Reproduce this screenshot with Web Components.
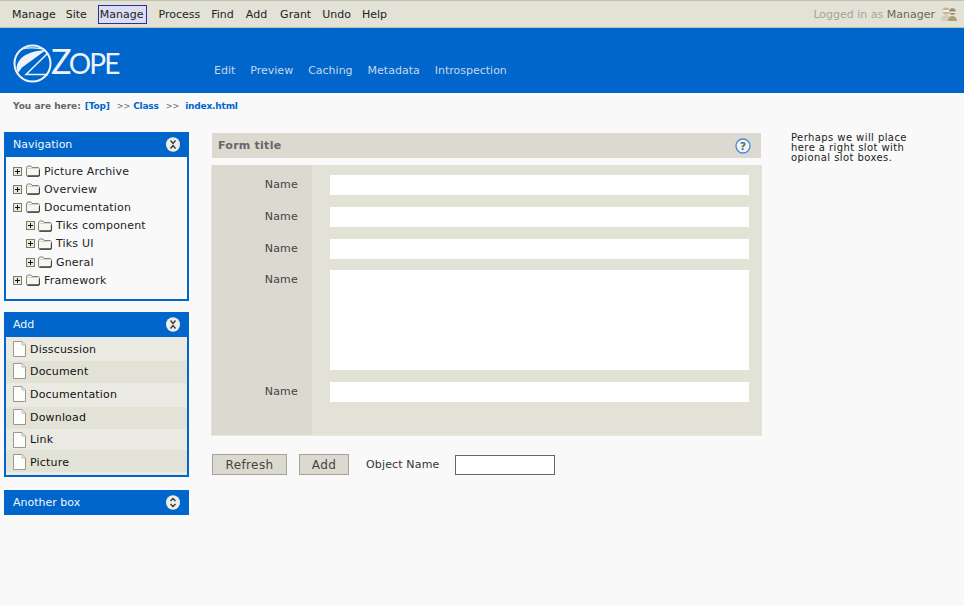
<!DOCTYPE html>
<html>
<head>
<meta charset="utf-8">
<title>Zope</title>
<style>
html, body { margin:0; padding:0; background:#f9f9f9; }
body { font-family:"DejaVu Sans", sans-serif; font-size:11px; color:#222; }
.page { display:flex; align-items:flex-start; padding:32px 0 0 4px; }
</style>
</head>
<body>
<top-bar></top-bar>
<logo-bar></logo-bar>
<bread-crumb></bread-crumb>
<div class="page">
  <left-col>
    <side-box title="Navigation" state="open">
      <tree-node>Picture Archive</tree-node>
      <tree-node>Overview</tree-node>
      <tree-node>Documentation</tree-node>
      <tree-node level="1">Tiks component</tree-node>
      <tree-node level="1">Tiks UI</tree-node>
      <tree-node level="1">Gneral</tree-node>
      <tree-node>Framework</tree-node>
    </side-box>
    <side-box title="Add" state="open" flush>
      <add-item h="24">Disscussion</add-item>
      <add-item h="22" up alt>Document</add-item>
      <add-item h="24" up>Documentation</add-item>
      <add-item h="22" up alt>Download</add-item>
      <add-item h="21">Link</add-item>
      <add-item h="22" down alt>Picture</add-item>
    </side-box>
    <side-box title="Another box" state="closed"></side-box>
  </left-col>
  <form-panel></form-panel>
  <right-slot>Perhaps we will place here a right slot with opional slot boxes.</right-slot>
</div>

<script>
class TopBar extends HTMLElement {
  connectedCallback(){
    this.attachShadow({mode:"open"});
    var items = ["Manage","Site","Manage","Process","Find","Add","Grant","Undo","Help"];
    var cls = ["","site","on","","","add","grant","",""];
    this.shadowRoot.innerHTML = `
    <style>
      :host { display:flex; justify-content:space-between; align-items:center; box-sizing:border-box; height:28px; background:#e2e2d6;
              border-top:1px solid #c4c0b2; border-bottom:1px solid #c4c0b2; padding:0 7px 0 12px; font-size:11px; }
      nav { display:flex; gap:11px; color:#222; }
      nav span.on { background:#dcdcf2; border:1px solid #2e2e94; padding:2px 2px 2px 1px; margin:-3px 1px -3px 0; }
      nav span.site { margin-left:-1px; }
      nav span.add { margin-left:1px; }
      nav span.grant { margin-left:2px; }
      .user { display:flex; align-items:center; gap:6px; color:#a8a496; }
      .user b { font-weight:normal; color:#6a6658; }
      svg { display:block; }
    </style>
    <nav>${items.map((t,i)=>`<span class="${cls[i]}">${t}</span>`).join("")}</nav>
    <div class="user"><span>Logged in as <b>Manager</b></span>
      <svg width="16" height="16" viewBox="0 0 16 16">
        <circle cx="5" cy="5" r="3.400" fill="#c4b496"/><path d="M2 4h6v2H2z" fill="#f4f0e6"/>
        <path d="M0 15c0-4 2-6 5-6s5 2 5 6z" fill="#d8ccb4"/>
        <circle cx="11.500" cy="5.500" r="3.200" fill="#9c8a68"/><path d="M8.500 5.500h6.500V7H8.500z" fill="#ece8dc"/>
        <path d="M7 15c0-3 2-5 4.500-5s4.500 2 4.500 5z" fill="#b09c76"/>
      </svg>
    </div>`;
  }
}
customElements.define("top-bar", TopBar);

class LogoBar extends HTMLElement {
  connectedCallback(){
    this.attachShadow({mode:"open"});
    var tabs = ["Edit","Preview","Caching","Metadata","Introspection"];
    this.shadowRoot.innerHTML = `
    <style>
      :host { display:flex; box-sizing:border-box; height:65px; background:#0066cc; padding-left:13px; }
      .logo { display:flex; width:201px; align-items:flex-start; padding-top:16px; box-sizing:border-box; }
      .word { color:#eef3fb; font:400 28px/34px "Lato","Open Sans",sans-serif; letter-spacing:-1.800px; margin:0 0 0 -1px; }
      .word i { font-style:normal; font-size:34px; margin-right:-1px; }
      nav { display:flex; gap:15px; align-self:flex-end; padding-bottom:15px; color:#c8d6ea; line-height:14px; }
      svg { display:block; flex:none; }
    </style>
    <div class="logo">
      <svg width="39" height="39" viewBox="0 0 39 39">
        <circle cx="19.500" cy="19.500" r="18" fill="none" stroke="#eef3fb" stroke-width="2"/>
        <path d="M3.500 24C5 14 13 7.500 33 6L9 23.500 5 29Z" fill="#eef3fb"/>
        <path d="M9 5C14 3.500 25 3.500 32 5.500" fill="none" stroke="#eef3fb" stroke-width="1.300"/>
        <path d="M35 9 13 30.500H35" fill="none" stroke="#eef3fb" stroke-width="1.500"/>
      </svg>
      <div class="word"><i>Z</i>OPE</div>
    </div>
    <nav>${tabs.map(t=>`<span>${t}</span>`).join("")}</nav>`;
  }
}
customElements.define("logo-bar", LogoBar);

class BreadCrumb extends HTMLElement {
  connectedCallback(){
    this.attachShadow({mode:"open"});
    this.shadowRoot.innerHTML = `
    <style>
      :host { display:flex; height:0; padding:7px 0 0 13px; font-size:9px; line-height:13px; color:#666; }
      b { font-weight:bold; }
      .l { color:#0066cc; letter-spacing:-.18px; }
      .s { font-weight:normal; font-size:8px; margin:0 3px 0 7px; }
    </style>
    <b>You are here:</b><b class="l" style="margin-left:4px">[Top]</b><span class="s">&gt;&gt;</span><b class="l">Class</b><span class="s" style="margin:0 6px 0 7px">&gt;&gt;</span><b class="l">index.html</b>`;
  }
}
customElements.define("bread-crumb", BreadCrumb);

class LeftCol extends HTMLElement {
  connectedCallback(){
    this.attachShadow({mode:"open"});
    this.shadowRoot.innerHTML = `
    <style>:host { display:flex; flex-direction:column; width:185px; flex:none; }</style><slot></slot>`;
  }
}
customElements.define("left-col", LeftCol);

class SideBox extends HTMLElement {
  connectedCallback(){
    this.attachShadow({mode:"open"});
    var open = this.getAttribute("state") == "open";
    var arrows = open
      ? `<path d="M4.500 3.500 7 6.500l2.500-3M4.500 11.500 7 8.500l2.500 3" />`
      : `<path d="M4.500 6 7 3.500 9.500 6M4.500 9 7 11.500 9.500 9" />`;
    this.shadowRoot.innerHTML = `
    <style>
      :host { display:block; margin-bottom:11px; }
      :host([flush]) { margin-bottom:13px; }
      .head { display:flex; justify-content:space-between; align-items:center; height:25px; box-sizing:border-box; background:#0066cc; color:#f2f6fc;
              padding:0 9px 0 9px; }
      .body { border:2px solid #0066cc; border-top:0; padding:5px 0 10px; background:#f9f9f9; }
      :host([flush]) .body { padding:0 0 3px; background:#eaeae2; }
      :host([state=closed]) .body { display:none; }
      svg { display:block; }
    </style>
    <div class="head"><span>${this.getAttribute("title")}</span>
      <svg width="14" height="15" viewBox="0 0 14 15">
        <ellipse cx="7" cy="7.500" rx="7" ry="7.300" fill="#eeeee8"/>
        <g fill="none" stroke="#333" stroke-width="1.300">${arrows}</g>
      </svg>
    </div>
    <div class="body"><slot></slot></div>`;
    this.removeAttribute("title");
  }
}
customElements.define("side-box", SideBox);

class TreeNode extends HTMLElement {
  connectedCallback(){
    this.attachShadow({mode:"open"});
    this.shadowRoot.innerHTML = `
    <style>
      :host { display:flex; align-items:center; height:18.2px; padding-left:7px; letter-spacing:.18px; color:#222; white-space:nowrap; }
      :host([level="1"]) { padding-left:20px; }
      svg { display:block; flex:none; }
      .p { margin-right:4px; }
      .f { margin-right:4px; }
      :host([level="1"]) .f { margin-left:-1px; }
    </style>
    <svg class="p" width="9" height="9" viewBox="0 0 9 9">
      <rect x=".5" y=".5" width="8" height="8" fill="#ece8d8" stroke="#7c7c72"/>
      <path d="M2 4.500h5M4.500 2v5" stroke="#111"/>
    </svg>
    <svg class="f" width="14" height="12" viewBox="0 0 14 12">
      <path d="M.5 10V3L1.500 1H5l1 1.500h6.500l1 1V10l-1 1.500H1.500z" fill="#f6f6f2" stroke="#85857c"/>
      <path d="M1.500 11h11l1-1V5" fill="none" stroke="#44443e" stroke-width="1.300"/>
      <path d="M1.500 3.500h11" stroke="#d4d4ca"/>
    </svg>
    <span><slot></slot></span>`;
  }
}
customElements.define("tree-node", TreeNode);

class AddItem extends HTMLElement {
  connectedCallback(){
    this.attachShadow({mode:"open"});
    this.shadowRoot.innerHTML = `
    <style>
      :host { display:flex; align-items:center; box-sizing:border-box; height:${this.getAttribute("h")}px; padding-left:7px; background:#eaeae2; color:#111; letter-spacing:.18px; }
      :host([alt]) { background:#e2e2d6; }
      :host([up]) { padding-bottom:2px; }
      :host([down]) { padding-top:2px; }
      svg { display:block; flex:none; margin-right:4px; }
    </style>
    <svg width="13" height="16" viewBox="0 0 13 16">
      <path d="M.5.500H9L12.500 4v11.500H.5z" fill="#fdfdfb" stroke="#9a9a94"/>
      <path d="M9 .5V4h3.500" fill="#e4e4de" stroke="#bcbcb6"/>
    </svg>
    <span><slot></slot></span>`;
  }
}
customElements.define("add-item", AddItem);

class FormRow extends HTMLElement {
  connectedCallback(){
    this.attachShadow({mode:"open"});
    var h = this.getAttribute("h") || 20;
    this.shadowRoot.innerHTML = `
    <style>
      :host { display:grid; grid-template-columns:100px 1fr; letter-spacing:.2px; color:#444; }
      .l { text-align:right; padding:3px 14px 0 0; line-height:14px; box-sizing:border-box; }
      .f { padding:0 13px 0 18px; }
      .i { display:block; width:100%; height:${h}px; box-sizing:border-box; background:#fff; border:0; margin:0; padding:0; }
    </style>
    <div class="l"><slot></slot></div>
    <div class="f"><input class="i"></div>`;
  }
}
customElements.define("form-row", FormRow);

class FormPanel extends HTMLElement {
  connectedCallback(){
    this.attachShadow({mode:"open"});
    this.shadowRoot.innerHTML = `
    <style>
      :host { display:block; width:551px; flex:none; margin:1px 0 0 22px; }
      .title { display:flex; justify-content:space-between; align-items:center; height:25px; box-sizing:border-box; margin:0 1px 7px 1px; background:#dbd9d0;
               padding:0 10px 0 6px; color:#666; font-weight:bold; letter-spacing:.25px; }
      .title svg { display:block; }
      .box { display:grid; grid-template-columns:100px 1fr; background:#e2e2d6; border-left:1px solid #e4e2da; border-bottom:1px solid #e8e8de; }
      .side { grid-column:1; grid-row:1; background:#dbd9d0; }
      .rows { grid-column:1 / 3; grid-row:1; padding:10px 0 33px; display:flex; flex-direction:column; }
      .btns { display:flex; align-items:center; margin:18px 0 0 1px; color:#333; letter-spacing:.15px; }
      button { font:12px "DejaVu Sans",sans-serif; letter-spacing:.4px; color:#444; background:#dbd9d0; border:1px solid #a4a49c; border-radius:0; height:21px; padding:0; margin:0 12px 0 0; box-sizing:border-box; }
      .obj { width:100px; height:20px; box-sizing:border-box; border:1px solid #666; background:#fff; margin:0 0 0 16px; padding:0; }
      .lbl { margin-left:5px; }
    </style>
    <div class="title"><span>Form title</span>
      <svg width="16" height="16" viewBox="0 0 16 16">
        <circle cx="8" cy="8" r="7" fill="#f4f4f0" stroke="#3c8ce0" stroke-width="1.300"/>
        <text x="8" y="12" text-anchor="middle" font-family="DejaVu Sans" font-weight="bold" font-size="11" fill="#666">?</text>
      </svg>
    </div>
    <div class="box">
      <div class="side"></div>
      <div class="rows">
        <form-row style="margin-bottom:12px">Name</form-row>
        <form-row style="margin-bottom:12px">Name</form-row>
        <form-row style="margin-bottom:11px">Name</form-row>
        <form-row h="100" style="margin-bottom:12px">Name</form-row>
        <form-row>Name</form-row>
      </div>
    </div>
    <div class="btns">
      <button style="width:75px">Refresh</button>
      <button style="width:50px">Add</button>
      <span class="lbl">Object Name</span>
      <input class="obj">
    </div>`;
  }
}
customElements.define("form-panel", FormPanel);

class RightSlot extends HTMLElement {
  connectedCallback(){
    this.attachShadow({mode:"open"});
    this.shadowRoot.innerHTML = `
    <style>
      :host { display:block; width:125px; margin:1px 0 0 29px; font-size:10px; line-height:10px; letter-spacing:.42px; color:#222; flex:none; }
    </style><slot></slot>`;
  }
}
customElements.define("right-slot", RightSlot);
</script>
</body>
</html>
